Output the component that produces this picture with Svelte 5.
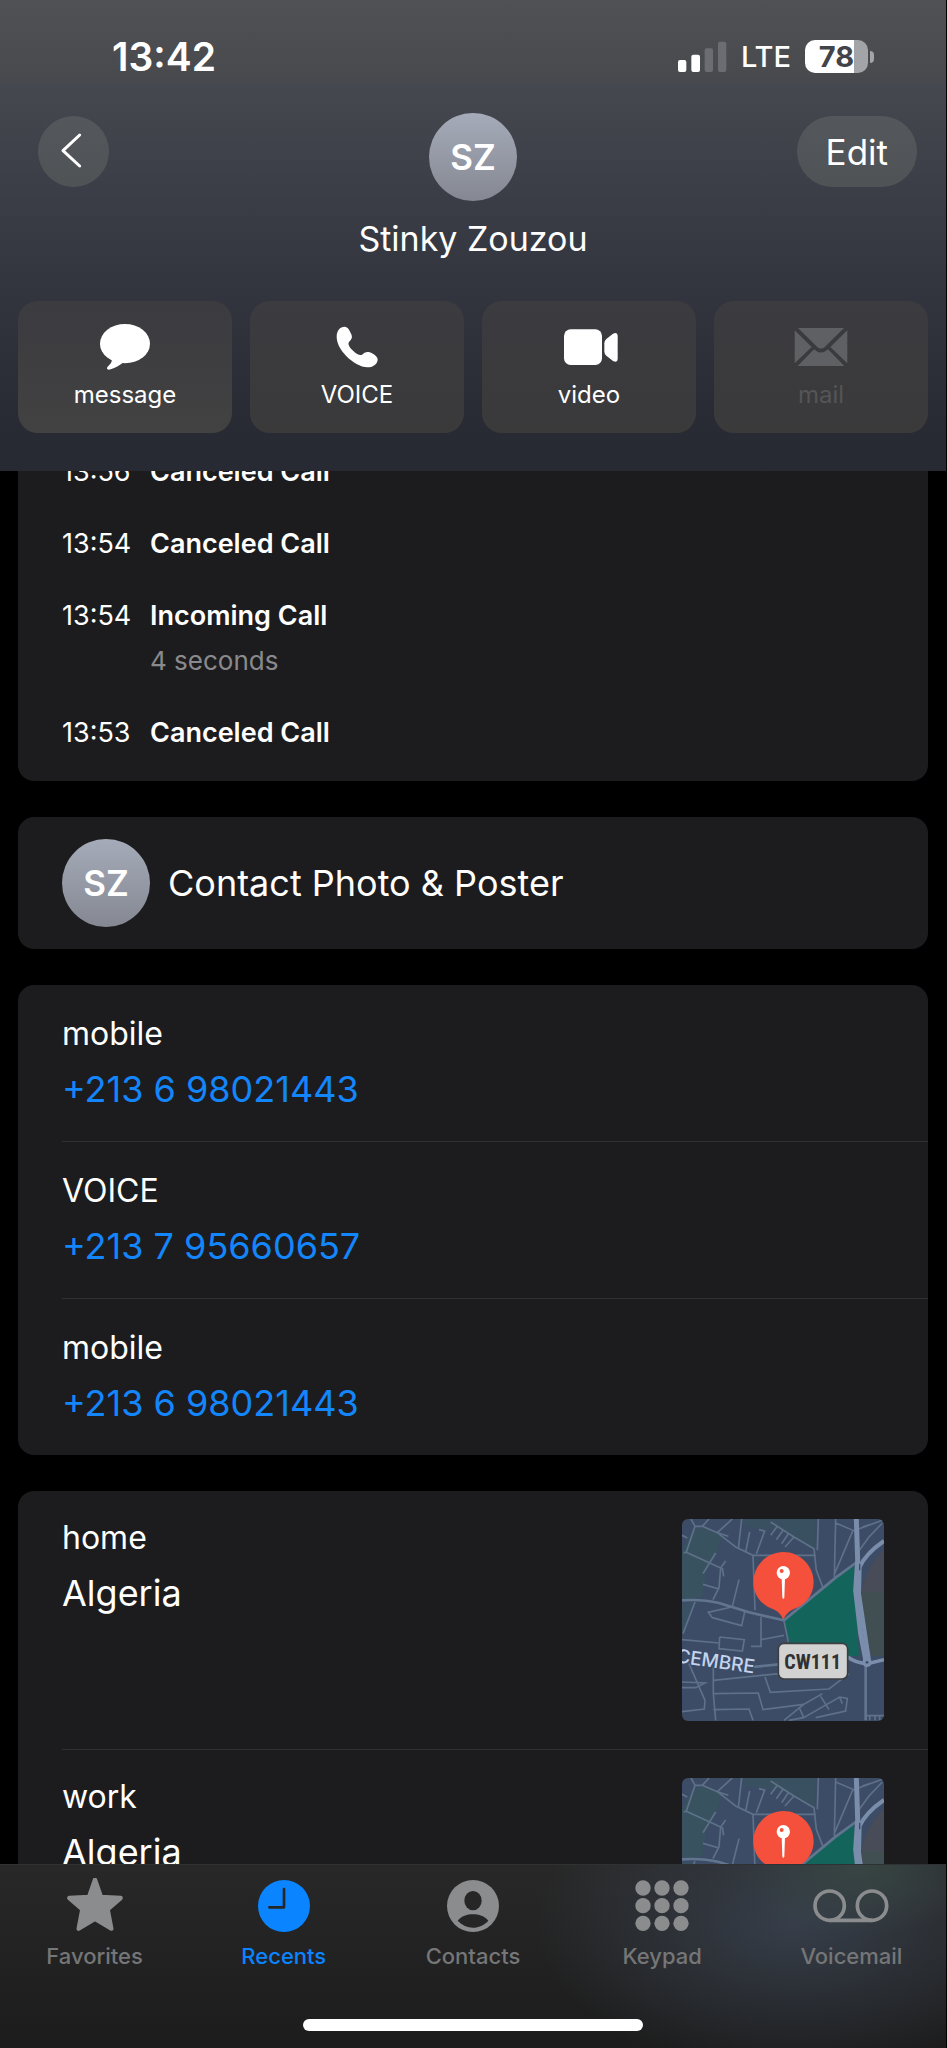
<script>
  const actions = [
    { id: 'message', label: 'message' },
    { id: 'call', label: 'VOICE' },
    { id: 'video', label: 'video' },
    { id: 'mail', label: 'mail', disabled: true }
  ];

  const calls = [
    { time: '13:56', kind: 'Canceled Call' },
    { time: '13:54', kind: 'Canceled Call' },
    { time: '13:54', kind: 'Incoming Call', detail: '4 seconds' },
    { time: '13:53', kind: 'Canceled Call' }
  ];

  const phones = [
    { label: 'mobile', number: '+213 6 98021443' },
    { label: 'VOICE', number: '+213 7 95660657' },
    { label: 'mobile', number: '+213 6 98021443' }
  ];

  const addresses = [
    { label: 'home', place: 'Algeria' },
    { label: 'work', place: 'Algeria' }
  ];

  const tabs = ['Favorites', 'Recents', 'Contacts', 'Keypad', 'Voicemail'];
  let current = $state('Recents');
</script>

{#snippet actionIcon(id)}
  {#if id === 'message'}
    <svg width="52" height="48" viewBox="297 129 156 144" aria-hidden="true">
      <ellipse cx="375" cy="191" rx="75" ry="59" />
      <path d="M326 226C340 238 338 246 325 258C317 266 322 271 332 268C347 264 358 256 368 249Z" />
    </svg>
  {:else if id === 'call'}
    <svg width="42" height="48" viewBox="1006 129 126 144" aria-hidden="true">
      <path d="M1008 170C1008 152 1018 140 1032 140C1041 140 1047 151 1052 163C1057 175 1050 180 1045 186C1040 193 1048 204 1058 213C1068 222 1078 228 1084 224C1090 219 1097 214 1107 217C1118 221 1131 229 1131 239C1130 253 1116 262 1100 262C1080 261 1055 247 1036 227C1018 208 1008 188 1008 170Z" />
    </svg>
  {:else if id === 'video'}
    <svg width="60" height="48" viewBox="277 129 180 144" aria-hidden="true">
      <rect x="292" y="148" width="114" height="107" rx="20" />
      <path d="M413 190Q413 182 419 177L439 161Q453 155 453 167V237Q453 249 439 243L419 227Q413 222 413 214Z" />
    </svg>
  {:else}
    <svg width="54" height="48" viewBox="983 129 162 144" aria-hidden="true">
      <path d="M995 144H1133L1076 200Q1064 211 1052 200Z" />
      <path d="M985 151L1036 201L985 250Z" />
      <path d="M1143 151L1092 201L1143 250Z" />
      <path d="M994 258L1043 208L1050 213Q1064 222 1078 213L1085 208L1134 258Z" />
    </svg>
  {/if}
{/snippet}

{#snippet tabIcon(name)}
  {#if name === 'Favorites'}
    <svg width="58" height="56" viewBox="197 113 174 168" aria-hidden="true">
      <path d="M284 118L302 170L361 173L322 207L333 265L284 236L235 265L246 207L207 173L266 170Z" stroke="currentColor" stroke-width="13" stroke-linejoin="round" />
    </svg>
  {:else if name === 'Recents'}
    <svg width="56" height="56" viewBox="768 113 168 168" aria-hidden="true">
      <circle cx="852" cy="197" r="78" />
      <path d="M852 146V201H808" fill="none" stroke="#262626" stroke-width="8" stroke-linecap="round" stroke-linejoin="round" />
    </svg>
  {:else if name === 'Contacts'}
    <svg width="56" height="56" viewBox="1335 113 168 168" aria-hidden="true">
      <circle cx="1419" cy="197" r="78" />
      <ellipse cx="1419" cy="181" rx="26" ry="29" fill="#262626" />
      <path d="M1373 241C1384 227 1402 222 1419 222C1436 222 1454 227 1465 241C1452 255 1436 262 1419 262C1402 262 1386 255 1373 241Z" fill="#262626" />
    </svg>
  {:else if name === 'Keypad'}
    <svg width="56" height="56" viewBox="499 413 168 168" aria-hidden="true">
      {#each [443, 496, 549] as cy}
        {#each [526, 583, 640] as cx}
          <circle {cx} {cy} r="23" />
        {/each}
      {/each}
    </svg>
  {:else}
    <svg width="78" height="56" viewBox="1033 413 234 168" aria-hidden="true">
      <g fill="none" stroke="currentColor" stroke-width="11">
        <circle cx="1086" cy="496" r="44" />
        <circle cx="1213" cy="496" r="44" />
        <path d="M1086 540H1213" />
      </g>
    </svg>
  {/if}
{/snippet}

{#snippet streetMap()}
  <svg class="map" width="202" height="202" viewBox="39 56 606 606" role="img" aria-label="Map">
    <rect x="39" y="56" width="606" height="606" fill="#3c4c66" />
    <g fill="#38535f">
      <path d="M70 90L110 80L160 110L140 160L110 220L100 290L39 300V150Z" opacity=".85" />
      <path d="M215 56H440V150L330 90L230 80Z" opacity=".7" />
      <path d="M39 310L75 305L45 400H39Z" opacity=".5" />
    </g>
    <path d="M645 150Q590 200 575 290L606 468H645Z" fill="#414f53" />
    <path d="M645 150Q590 200 577 276H645Z" fill="#484b58" />
    <path d="M345 358L420 296L500 230L555 192L560 290L570 466L536 468L520 430H362Z" fill="#13655c" />
    <g fill="none" stroke="#5e7189" stroke-width="5">
      <path d="M66 56L78 78L52 155L44 158M78 78H100L145 97L200 140L252 165H440" />
      <path d="M100 78L120 56M145 97L190 56M145 97L178 108M39 105L55 113" />
      <path d="M218 56L208 145M242 95L230 155M270 88L287 92L262 160M252 165L258 330" />
      <path d="M305 65L375 110L435 145L442 210L462 262M325 78L305 105M342 90L322 118M358 100L338 130M375 110L348 140" />
      <path d="M448 56L445 150M500 56L496 230M500 68L552 90L496 222M552 92L640 60M560 165L600 110L640 68M580 80L605 72" />
      <path d="M50 155L155 203L170 182M140 158L102 220M155 203L150 262L132 298M160 203L164 228M102 252L150 266M210 238L190 318" />
      <path d="M78 305L42 400M188 320L118 336L130 352L218 376L228 330M276 350V438H246M276 418L345 405M345 362L358 425" />
      <path d="M39 418L150 428M152 410L226 418L220 452L150 445L152 410" />
      <path d="M60 490L108 600L106 626L39 634M39 545L108 548L80 562H39" />
      <path d="M133 500V580L140 660M133 540L330 520M133 580L268 578L282 628L404 612M288 530L304 576L480 566L540 520M133 628L240 626L252 660" />
      <path d="M345 660L404 612L460 580M390 620L404 652L512 590L535 594L530 632L440 652M455 588L480 628M512 590L520 610M404 652L360 660" />
      <path d="M590 646H645M602 646V660M618 646V660M632 646V660" />
    </g>
    <g fill="none" stroke="#62758f" stroke-width="8">
      <path d="M39 300Q100 296 150 308L240 336L345 360L500 232L560 188" />
      <path d="M250 500L330 492M590 490V660" />
    </g>
    <g fill="none" stroke="#7a8dab">
      <path d="M562 56L566 180L560 270L575 400L592 488" stroke-width="15" />
      <path d="M645 122Q590 160 572 200L570 280L600 480" stroke-width="12" />
      <path d="M536 470Q560 488 595 490L645 478" stroke-width="11" />
    </g>
    <circle cx="594" cy="486" r="14" fill="#7a8dab" />
    <circle cx="594" cy="486" r="4" fill="#3c4c66" />
    <path d="M572 190V210" stroke="#3c4c66" stroke-width="4" />
    <text class="street" x="20" y="486" transform="rotate(8 20 486)">CEMBRE</text>
    <path d="M343 155C294 155 253 196 253 246C253 286 279 315 313 327Q334 336 343 358Q352 336 373 327C408 315 434 286 434 246C434 196 393 155 343 155Z" fill="#f4503b" />
    <circle cx="343" cy="217" r="20" fill="#fff" />
    <path d="M338 232H348L346 291Q343 301 340 291Z" fill="#fff" />
    <circle cx="338" cy="212" r="6" fill="#f4503b" />
    <rect x="328" y="429" width="208" height="107" rx="17" fill="#d2d2d2" stroke="#3c3e42" stroke-width="5" />
    <text class="road" x="431" y="505" text-anchor="middle">CW111</text>
  </svg>
{/snippet}

<div class="screen">
  <header>
    <div class="status">
      <time>13:42</time>
      <div class="signals">
        <svg width="49" height="32" viewBox="645 120 147 96" aria-label="Signal: 2 of 4 bars" role="img">
          <rect x="645" y="177" width="25" height="36" rx="6" fill="#fff" />
          <rect x="685" y="161" width="26" height="52" rx="6" fill="#fff" />
          <rect x="725" y="142" width="25" height="71" rx="6" fill="#6b6d72" />
          <rect x="765" y="122" width="25" height="91" rx="6" fill="#6b6d72" />
        </svg>
        <span class="network">LTE</span>
        <div class="battery"><span>78</span></div>
      </div>
    </div>

    <div class="nav">
      <div class="nav-start">
        <button class="round back" aria-label="Back">
          <svg width="71" height="71" viewBox="114 350 213 213" aria-hidden="true">
            <path d="M239 407L189 454L239 500" fill="none" stroke="#fff" stroke-width="9" stroke-linecap="round" stroke-linejoin="round" />
          </svg>
        </button>
      </div>
      <div class="avatar">SZ</div>
      <div class="nav-end"><button class="round edit">Edit</button></div>
    </div>
    <h1>Stinky Zouzou</h1>

    <div class="actions">
      {#each actions as action}
        <button class="action" disabled={action.disabled}>
          {@render actionIcon(action.id)}
          <span>{action.label}</span>
        </button>
      {/each}
    </div>
  </header>

  <main>
    <section class="card calls">
      {#each calls as call}
        <div class="call">
          <time>{call.time}</time>
          <div>
            <strong>{call.kind}</strong>
            {#if call.detail}<p>{call.detail}</p>{/if}
          </div>
        </div>
      {/each}
    </section>

    <button class="card poster">
      <span class="avatar">SZ</span>
      <span>Contact Photo &amp; Poster</span>
    </button>

    <section class="card">
      {#each phones as phone}
        <div class="row phone">
          <div class="field">
            <span class="label">{phone.label}</span>
            <a class="value" href={'tel:' + phone.number.replaceAll(' ', '')}>{phone.number}</a>
          </div>
        </div>
      {/each}
    </section>

    <section class="card">
      {#each addresses as address}
        <div class="row address">
          <div class="field">
            <span class="label">{address.label}</span>
            <span class="value">{address.place}</span>
          </div>
          {@render streetMap()}
        </div>
      {/each}
    </section>
  </main>

  <footer>
    <nav>
      {#each tabs as tab}
        <button class="tab" class:active={tab === current} onclick={() => (current = tab)}>
          {@render tabIcon(tab)}
          <span>{tab}</span>
        </button>
      {/each}
    </nav>
    <div class="home-indicator"></div>
  </footer>
</div>

<style>
  :global(body) {
    background: #000;
  }

  .screen {
    display: flex;
    flex-direction: column;
    height: 100vh;
    padding-right: 1px;
    box-sizing: border-box;
    background: #000;
    color: #fff;
    font-family: Inter, 'Liberation Sans', sans-serif;
    overflow: hidden;
  }

  button {
    border: 0;
    margin: 0;
    padding: 0;
    color: inherit;
    font: inherit;
  }

  svg {
    display: block;
    fill: currentColor;
    flex: none;
  }

  header {
    flex: none;
    padding-bottom: 38px;
    background: linear-gradient(#505154 0, #494a4d 76px, #464850 84px, #3d4048 170px, #34363f 280px, #292b34 420px, #282a33 100%);
  }

  .status {
    display: flex;
    align-items: center;
    justify-content: space-between;
    height: 113px;
    padding: 0 78px 0 112px;
  }

  .status time {
    font-size: 39px;
    font-weight: 600;
  }

  .signals {
    display: flex;
    align-items: center;
    gap: 14px;
  }

  .network {
    font-size: 29px;
    font-weight: 500;
  }

  .battery {
    position: relative;
    display: grid;
    place-items: center;
    width: 63px;
    height: 33px;
    border-radius: 10px;
    background: linear-gradient(90deg, #fff 78%, #a3a4a7 78%);
    color: #424449;
    font-size: 29px;
    font-weight: 700;
    line-height: 33px;
  }

  .battery::after {
    content: '';
    position: absolute;
    left: 65px;
    top: 11px;
    width: 4px;
    height: 12px;
    border-radius: 0 6px 6px 0;
    background: #a3a4a7;
  }

  .nav {
    display: grid;
    grid-template-columns: 1fr auto 1fr;
    align-items: start;
    padding: 0 29px;
  }

  .nav-start {
    padding: 3px 0 0 9px;
  }

  .nav-end {
    padding-top: 3px;
    justify-self: end;
  }

  .round {
    display: block;
    height: 71px;
    border-radius: 36px;
    background: linear-gradient(#54575b, #505356);
  }

  .back {
    width: 71px;
  }

  .edit {
    padding: 0 29px;
    font-size: 35px;
  }

  .avatar {
    display: grid;
    place-items: center;
    width: 88px;
    height: 88px;
    border-radius: 50%;
    background: linear-gradient(#a5abb9, #858892);
    font-size: 35px;
    font-weight: 600;
    line-height: 44px;
  }

  h1 {
    margin: 16px 0 40px;
    font-size: 34px;
    font-weight: 400;
    line-height: 44px;
    text-align: center;
  }

  .actions {
    display: grid;
    grid-template-columns: repeat(4, 1fr);
    gap: 18px;
    padding: 0 18px;
  }

  .action {
    display: flex;
    flex-direction: column;
    align-items: center;
    gap: 8px;
    padding: 22px 0;
    border-radius: 20px;
    background: linear-gradient(#3b3b40, #3a3a3b);
    font-size: 24px;
    line-height: 32px;
  }

  .action:first-child {
    background: linear-gradient(#3b3b40, #424242);
  }

  .action:disabled {
    color: #5f6063;
  }

  .action:disabled span {
    color: #545557;
  }

  main {
    flex: 1;
    min-height: 0;
    overflow: hidden;
    display: flex;
    flex-direction: column;
    gap: 36px;
    padding: 0 18px;
  }

  .card {
    flex: none;
    border-radius: 16px;
    background: #1c1c1e;
  }

  /* The list is scrolled so that its first rows are under the header. */
  .calls {
    margin-top: -35px;
    padding: 0 44px 12px;
    font-size: 27px;
    line-height: 36px;
  }

  .call {
    display: grid;
    grid-template-columns: 88px 1fr;
    padding: 18px 0;
  }

  .call strong {
    font-weight: 600;
  }

  .call p {
    margin: 9px 0 0;
    color: #8a8a8d;
    font-size: 26px;
  }

  .poster {
    display: flex;
    align-items: center;
    gap: 18px;
    padding: 22px 44px;
    font-size: 36px;
    text-align: left;
  }

  .row {
    display: flex;
    justify-content: space-between;
    margin-left: 44px;
    padding-right: 44px;
    border-bottom: 1px solid #303032;
  }

  .row:last-child {
    border-bottom: 0;
  }

  .phone {
    padding-top: 30px;
    padding-bottom: 28px;
  }

  .address {
    padding-top: 28px;
    padding-bottom: 28px;
  }

  .field {
    display: flex;
    flex-direction: column;
    gap: 12px;
  }

  .label {
    font-size: 32px;
    line-height: 38px;
  }

  .value {
    color: inherit;
    font-size: 36px;
    line-height: 48px;
    text-decoration: none;
  }

  a.value {
    color: #1486fb;
  }

  .map {
    border-radius: 6px;
  }

  .street {
    fill: #c4d4ee;
    stroke: #3c4c66;
    stroke-width: 6px;
    paint-order: stroke;
    font-size: 57px;
    font-weight: 500;
  }

  .road {
    fill: #303133;
    font-family: 'Liberation Sans Narrow', 'Roboto Condensed', Roboto, sans-serif;
    font-size: 60px;
    font-weight: 700;
  }

  footer {
    flex: none;
    border-top: 1px solid #303132;
    background:
      radial-gradient(ellipse 130px 70px at 91% 0, rgba(60, 80, 72, 0.6), transparent),
      radial-gradient(ellipse 260px 150px at 84% 32%, rgba(64, 76, 94, 0.65), transparent),
      linear-gradient(#282828, #1c1c1c);
  }

  nav {
    display: grid;
    grid-template-columns: repeat(5, 1fr);
    padding-top: 13px;
  }

  .tab {
    display: flex;
    flex-direction: column;
    align-items: center;
    gap: 8px;
    background: none;
    color: #8b8c8e;
    font-size: 22px;
    font-weight: 500;
    line-height: 28px;
  }

  .tab span {
    color: #757677;
  }

  .tab.active,
  .tab.active span {
    color: #0a84ff;
  }

  .home-indicator {
    width: 36%;
    height: 12px;
    margin: 49px auto 17px;
    border-radius: 6px;
    background: #fff;
  }
</style>
